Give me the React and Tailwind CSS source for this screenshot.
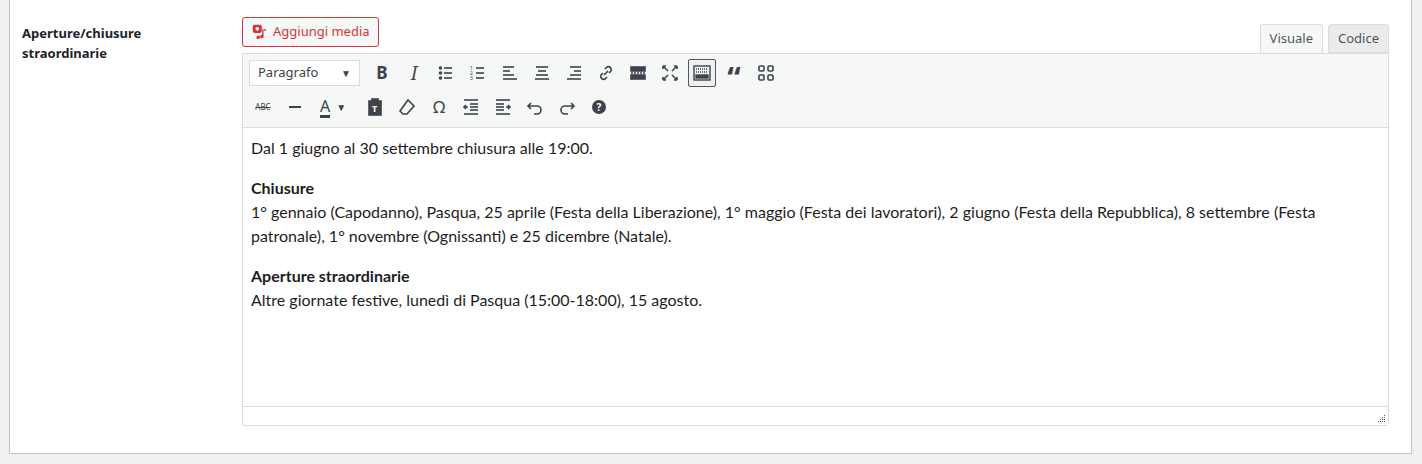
import React from "react";

const I = ({ children, w = 20 }) => (
  <span className="w-[28px] h-[26px] flex items-center justify-center text-[#3c434a]">
    <svg width={w} height={w} viewBox="0 0 20 20" fill="none" stroke="currentColor" strokeWidth="1.6">{children}</svg>
  </span>
);
const Lines = ({ rows }) => rows.map(([x1, x2, y], i) => <line key={i} x1={x1} x2={x2} y1={y} y2={y} />);

export default function App() {
  return (
    <div className="w-[1422px] h-[464px] bg-[#f0f0f1] pl-[9px] [font-family:Arimo,'Liberation_Sans',Arial,sans-serif]">
      <div className="w-[1403px] h-[454px] bg-white border-l border-r border-b border-[#c3c4c7] flex">
        <div className="w-[232px] pl-[12px] pt-[23px] text-[13px] font-bold text-[#1d2327] leading-[20px]">
          Aperture/chiusure<br />straordinarie
        </div>
        <div className="w-[1147px] pt-[17px]">
          <div className="flex justify-between items-end">
            <button className="h-[30px] px-[8px] mb-[6px] flex items-center gap-[4px] border border-[#d63638] rounded-[3px] bg-[#f6f7f7] text-[#d63638] text-[13px]">
              <svg width="18" height="18" viewBox="0 0 20 20" fill="#d63638"><rect x="2" y="2" width="10" height="9" rx="2"/><circle cx="7" cy="6.5" r="2" fill="#fff"/><path d="M14 6v9a2 2 0 1 1-1.5-1.9V7h4v2H15z"/><circle cx="8" cy="16" r="2"/></svg>
              Aggiungi media
            </button>
            <div className="flex gap-[5px] text-[13px] text-[#50575e]">
              <div className="h-[29px] px-[9px] flex items-center border border-b-0 border-[#dcdcde] bg-[#f6f7f7] rounded-t-[3px]">Visuale</div>
              <div className="h-[29px] px-[9px] flex items-center border border-[#dcdcde] bg-[#ebebeb] rounded-t-[3px]">Codice</div>
            </div>
          </div>
          <div className="border border-[#dcdcde] rounded-bl-[3px] rounded-br-[3px]">
            <div className="bg-[#f6f7f7] border-b border-[#dcdcde] px-[6px] pt-[5px] pb-[6px] h-[74px]">
              <div className="flex items-center gap-[4px] h-[28px]">
                <div className="w-[111px] h-[26px] mr-[4px] bg-white border border-[#dcdcde] flex items-center justify-between px-[8px] text-[13px] text-[#3c434a]">Paragrafo<span className="text-[10px]">▼</span></div>
                <span className="w-[28px] text-center font-bold text-[17px] text-[#3c434a]">B</span>
                <span className="w-[28px] text-center italic text-[19px] [font-family:'Liberation_Serif',serif] text-[#3c434a]">I</span>
                <I><Lines rows={[[8,16,5],[8,16,10],[8,16,15]]}/><circle cx="4.5" cy="5" r="1" /><circle cx="4.5" cy="10" r="1"/><circle cx="4.5" cy="15" r="1"/></I>
                <I><Lines rows={[[8,16,5],[8,16,10],[8,16,15]]}/><text x="2" y="7" fontSize="5" stroke="none" fill="currentColor">1</text><text x="2" y="12" fontSize="5" stroke="none" fill="currentColor">2</text><text x="2" y="17" fontSize="5" stroke="none" fill="currentColor">3</text></I>
                <I><Lines rows={[[3,14,4],[3,10,8],[3,14,12],[3,17,16]]}/></I>
                <I><Lines rows={[[4,16,4],[6,14,8],[4,16,12],[3,17,16]]}/></I>
                <I><Lines rows={[[6,17,4],[10,17,8],[6,17,12],[3,17,16]]}/></I>
                <I><path d="M8 12l4-4M9 6l2-2a3 3 0 0 1 4 4l-2 2M11 14l-2 2a3 3 0 0 1-4-4l2-2"/></I>
                <I><rect x="3" y="4" width="14" height="4" fill="currentColor"/><rect x="3" y="12" width="14" height="4" fill="currentColor"/><line x1="3" x2="17" y1="10" y2="10" strokeDasharray="2 1"/></I>
                <I><path d="M4 4l4 4M16 4l-4 4M4 16l4-4M16 16l-4-4M3 3h3M3 3v3M17 3h-3M17 3v3M3 17h3M3 17v-3M17 17h-3M17 17v-3"/></I>
                <span className="w-[28px] h-[28px] border border-[#50575e] bg-[#f0f0f1] rounded-[2px] flex items-center justify-center"><svg width="20" height="20" viewBox="0 0 20 20" fill="none" stroke="#3c434a" strokeWidth="1.4"><rect x="2" y="3" width="16" height="14"/><line x1="4" x2="16" y1="6" y2="6" strokeDasharray="1 1"/><line x1="4" x2="16" y1="9" y2="9" strokeDasharray="1 1"/><rect x="4" y="12" width="12" height="3" fill="#3c434a"/></svg></span>
                <span className="w-[28px] text-center text-[30px] font-bold leading-[20px] pt-[10px] text-[#3c434a] [font-family:'Liberation_Serif',serif]">“</span>
                <I><rect x="3" y="3" width="5" height="5" rx="1"/><rect x="12" y="3" width="5" height="5" rx="1"/><rect x="3" y="12" width="5" height="5" rx="1"/><rect x="12" y="12" width="5" height="5" rx="1"/></I>
              </div>
              <div className="flex items-center gap-[4px] h-[28px] mt-[6px]">
                <span className="w-[28px] text-center text-[8px] line-through text-[#3c434a]">ABC</span>
                <I><line x1="4" x2="16" y1="10" y2="10" strokeWidth="2"/></I>
                <span className="w-[44px] flex items-center gap-[6px] pl-[7px] text-[#3c434a]"><span className="text-[16px] border-b-[3px] border-[#3c434a] leading-[18px]">A</span><span className="text-[10px]">▼</span></span>
                <I><rect x="4" y="4" width="12" height="14" fill="currentColor"/><rect x="7" y="2" width="6" height="3" fill="currentColor"/><text x="7" y="15" fontSize="9" fill="#fff" stroke="none" fontWeight="bold">T</text></I>
                <I><path d="M11 3l6 6-7 8H6l-3-3z"/></I>
                <span className="w-[28px] text-center text-[17px] text-[#3c434a]">Ω</span>
                <I><Lines rows={[[3,17,3],[9,17,7],[9,17,10],[9,17,13],[3,17,17]]}/><path d="M7 10H3M5 8l-2 2 2 2"/></I>
                <I><Lines rows={[[3,17,3],[3,11,7],[3,11,10],[3,11,13],[3,17,17]]}/><path d="M13 10h4M15 8l2 2-2 2"/></I>
                <span className="text-[#a7aaad] flex"><I><path d="M6 6L3 9l3 3M3 9h9a4 4 0 0 1 0 8H9"/></I></span>
                <span className="text-[#a7aaad] flex"><I><path d="M14 6l3 3-3 3M17 9H8a4 4 0 0 0 0 8h3"/></I></span>
                <span className="w-[28px] flex justify-center"><span className="w-[14px] h-[14px] rounded-full bg-[#3c434a] text-white text-[10px] font-bold flex items-center justify-center">?</span></span>
              </div>
            </div>
            <div className="h-[278px] px-[8px] pt-[8px] text-[16px] leading-[24px] text-[#1e1e1e] [font-family:Lato,sans-serif]">
              <p>Dal 1 giugno al 30 settembre chiusura alle 19:00.</p>
              <p className="mt-[16px]"><b>Chiusure</b><br />1° gennaio (Capodanno), Pasqua, 25 aprile (Festa della Liberazione), 1° maggio (Festa dei lavoratori), 2 giugno (Festa della Repubblica), 8 settembre (Festa patronale), 1° novembre (Ognissanti) e 25 dicembre (Natale).</p>
              <p className="mt-[16px]"><b>Aperture straordinarie</b><br />Altre giornate festive, lunedì di Pasqua (15:00-18:00), 15 agosto.</p>
            </div>
            <div className="h-[19px] border-t border-[#dcdcde] flex justify-end items-end pr-[2px] pb-[2px]">
              <svg width="8" height="8" viewBox="0 0 8 8" fill="#50575e"><rect x="6" y="0" width="1" height="1"/><rect x="4" y="2" width="1" height="1"/><rect x="6" y="2" width="1" height="1"/><rect x="2" y="4" width="1" height="1"/><rect x="4" y="4" width="1" height="1"/><rect x="6" y="4" width="1" height="1"/><rect x="0" y="6" width="1" height="1"/><rect x="2" y="6" width="1" height="1"/><rect x="4" y="6" width="1" height="1"/><rect x="6" y="6" width="1" height="1"/></svg>
            </div>
          </div>
        </div>
      </div>
    </div>
  );
}
